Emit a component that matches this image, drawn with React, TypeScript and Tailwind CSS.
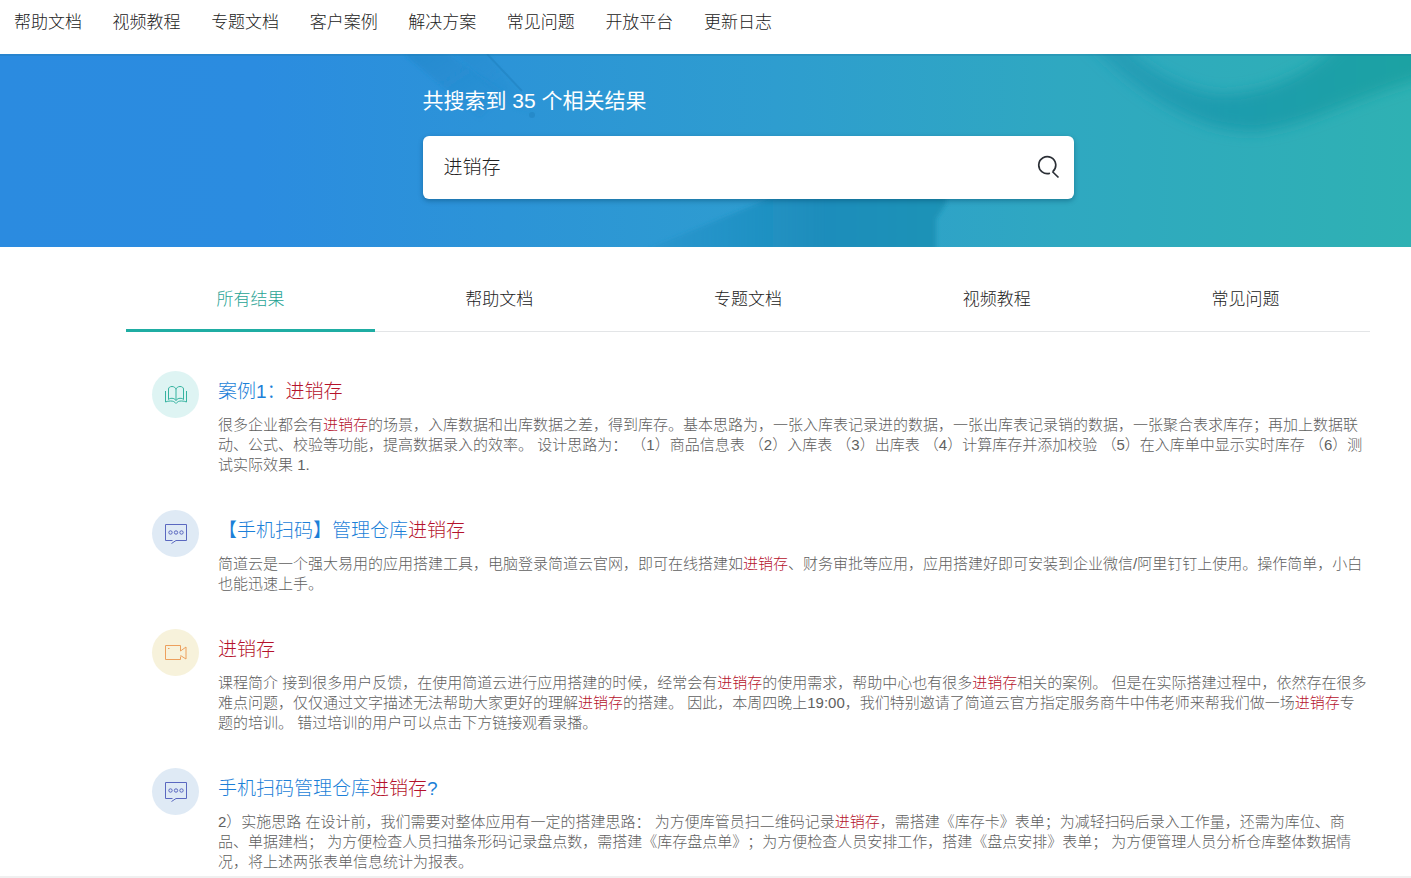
import { Fragment, useState } from "react";

const KEYWORD = "进销存";

const NAV = [
  "帮助文档",
  "视频教程",
  "专题文档",
  "客户案例",
  "解决方案",
  "常见问题",
  "开放平台",
  "更新日志",
];

const TABS = ["所有结果", "帮助文档", "专题文档", "视频教程", "常见问题"];

type Kind = "case" | "chat" | "video";

const RESULTS: { kind: Kind; title: string; body: string }[] = [
  {
    kind: "case",
    title: "案例1：进销存",
    body: "很多企业都会有进销存的场景，入库数据和出库数据之差，得到库存。基本思路为，一张入库表记录进的数据，一张出库表记录销的数据，一张聚合表求库存；再加上数据联动、公式、校验等功能，提高数据录入的效率。 设计思路为： （1）商品信息表 （2）入库表 （3）出库表 （4）计算库存并添加校验 （5）在入库单中显示实时库存 （6）测试实际效果 1.",
  },
  {
    kind: "chat",
    title: "【手机扫码】管理仓库进销存",
    body: "简道云是一个强大易用的应用搭建工具，电脑登录简道云官网，即可在线搭建如进销存、财务审批等应用，应用搭建好即可安装到企业微信/阿里钉钉上使用。操作简单，小白也能迅速上手。",
  },
  {
    kind: "video",
    title: "进销存",
    body: "课程简介 接到很多用户反馈，在使用简道云进行应用搭建的时候，经常会有进销存的使用需求，帮助中心也有很多进销存相关的案例。 但是在实际搭建过程中，依然存在很多难点问题，仅仅通过文字描述无法帮助大家更好的理解进销存的搭建。 因此，本周四晚上19:00，我们特别邀请了简道云官方指定服务商牛中伟老师来帮我们做一场进销存专题的培训。 错过培训的用户可以点击下方链接观看录播。",
  },
  {
    kind: "chat",
    title: "手机扫码管理仓库进销存?",
    body: "2）实施思路 在设计前，我们需要对整体应用有一定的搭建思路： 为方便库管员扫二维码记录进销存，需搭建《库存卡》表单；为减轻扫码后录入工作量，还需为库位、商品、单据建档； 为方便检查人员扫描条形码记录盘点数，需搭建《库存盘点单》；为方便检查人员安排工作，搭建《盘点安排》表单； 为方便管理人员分析仓库整体数据情况，将上述两张表单信息统计为报表。",
  },
];

function Highlight({ text }: { text: string }) {
  return text.split(KEYWORD).map((part, i) => (
    <Fragment key={i}>
      {i > 0 && <em className="text-[#b5122b] not-italic">{KEYWORD}</em>}
      {part}
    </Fragment>
  ));
}

function KindIcon({ kind }: { kind: Kind }) {
  if (kind === "case") {
    return (
      <span className="flex size-[47px] shrink-0 items-center justify-center rounded-full bg-[#def4f3] text-[#35b3a0]">
        <svg width="24" height="20" viewBox="0 0 24 20" fill="none" stroke="currentColor" aria-hidden="true">
          <path d="M12 4.500v11M12 4.500C11.500 2.500 10 1.500 8 1.500S4.500 2.500 4.500 4v10.500c1-1 2-1.200 3.500-1.200s3 .7 4 2.200c1-1.500 2.500-2.200 4-2.200s2.500.2 3.500 1.200V4c0-1.500-1.500-2.500-3.500-2.500s-3.500 1-4 3z" />
          <path d="M1.500 6v11c1.500-.7 3-1 5-1 2.500 0 4 .5 5.500 2.500 1.500-2 3-2.500 5.500-2.500 2 0 3.500.3 5 1V6" />
        </svg>
      </span>
    );
  }
  if (kind === "chat") {
    return (
      <span className="flex size-[47px] shrink-0 items-center justify-center rounded-full bg-[#dfeaf5] text-[#5a68c0]">
        <svg width="24" height="24" viewBox="0 0 24 24" fill="none" stroke="currentColor" aria-hidden="true">
          <path d="M8.500 18.500h-7v-16h21v16H12L7.500 21.500" />
          <circle cx="6.500" cy="10.500" r="1.700" />
          <circle cx="12" cy="10.500" r="1.700" />
          <circle cx="17.500" cy="10.500" r="1.700" />
        </svg>
      </span>
    );
  }
  return (
    <span className="flex size-[47px] shrink-0 items-center justify-center rounded-full bg-[#f7f2db] text-[#eda05c]">
      <svg width="24" height="18" viewBox="0 0 24 18" fill="none" stroke="currentColor" aria-hidden="true">
        <path d="M16.500 12.500v3h-15v-14h15v5.500l5.500-4v12l-5.500-3.500" />
        <path d="M4 4.500h1.500" />
      </svg>
    </span>
  );
}

function BannerArt() {
  return (
    <svg
      className="absolute inset-0 size-full"
      viewBox="0 0 1411 193"
      preserveAspectRatio="none"
      aria-hidden="true"
    >
      <defs>
        <linearGradient id="sea" x1="0" x2="1" y1="0" y2="0">
          <stop offset="0" stopColor="#2b8be0" />
          <stop offset="0.18" stopColor="#2b8ce0" />
          <stop offset="0.36" stopColor="#2c94d7" />
          <stop offset="0.55" stopColor="#2e9dcf" />
          <stop offset="0.75" stopColor="#2fa8c1" />
          <stop offset="1" stopColor="#2fb1b3" />
        </linearGradient>
        <linearGradient id="wave" x1="0" x2="1" y1="0" y2="0">
          <stop offset="0" stopColor="#2199b5" stopOpacity="0.7" />
          <stop offset="0.4" stopColor="#1f9cae" />
          <stop offset="1" stopColor="#1fa3a2" />
        </linearGradient>
        <linearGradient id="fin" x1="0" x2="1" y1="0" y2="0">
          <stop offset="0" stopColor="#2090c8" stopOpacity="0.4" />
          <stop offset="0.6" stopColor="#1b8dbb" />
          <stop offset="1" stopColor="#1b93b6" />
        </linearGradient>
        <linearGradient id="streak" x1="0" x2="1" y1="0" y2="1">
          <stop offset="0" stopColor="#1f86c8" stopOpacity="0.6" />
          <stop offset="1" stopColor="#2288cb" stopOpacity="0.15" />
        </linearGradient>
        <filter id="soft" x="-10%" y="-20%" width="120%" height="140%">
          <feGaussianBlur stdDeviation="7" />
        </filter>
        <filter id="softer" x="-10%" y="-20%" width="120%" height="140%">
          <feGaussianBlur stdDeviation="2" />
        </filter>
      </defs>
      <rect width="1411" height="193" fill="url(#sea)" />
      <path
        d="M1085-14C1120 20 1180 78 1255 78C1310 72 1350 44 1430 22V-20H1345C1320 14 1270 42 1215 40C1170 32 1140 8 1118-14z"
        fill="url(#wave)"
        filter="url(#soft)"
      />
      <path d="M645 196L780 140L946 140V150L936 165L936 196z" fill="url(#fin)" filter="url(#softer)" />
      <path d="M404 0L448 0L505 38L480 64z" fill="url(#streak)" filter="url(#softer)" />
      <path d="M455 0H487L534 60L515 54z" fill="url(#streak)" filter="url(#softer)" opacity="0.6" />
      <path d="M487 0L522 37" stroke="#1f7fbd" strokeWidth="2" opacity="0.5" />
      <circle cx="532" cy="61" r="3" fill="#1f7fbd" opacity="0.5" />
      <rect width="1411" height="2" fill="#1d6f9c" opacity="0.25" />
    </svg>
  );
}

export default function App() {
  const [query, setQuery] = useState(KEYWORD);
  const [tab, setTab] = useState(0);

  return (
    <div className="min-h-screen bg-white font-['Liberation_Sans','Noto_Sans_CJK_SC',sans-serif] font-light text-[#222] [text-spacing-trim:space-all]">
      <header className="h-[54px] pt-[11px] pl-3.5">
        <nav className="flex max-w-[758px] justify-between text-[17px] leading-6 whitespace-nowrap">
          {NAV.map((label) => (
            <a key={label} href="#">
              {label}
            </a>
          ))}
        </nav>
      </header>

      <section className="relative h-[193px] overflow-hidden">
        <BannerArt />
        <div className="relative mr-[41px] ml-[126px] pt-8">
          <div className="mx-auto max-w-[651px]">
            <h1 className="text-[21px] leading-[30px] font-normal text-white">共搜索到 35 个相关结果</h1>
            <form
              className="mt-5 flex h-[63px] items-center rounded-md bg-white pr-3.5 pl-[21px] shadow-[0_2px_5px_rgba(0,60,90,0.4)]"
              onSubmit={(e) => e.preventDefault()}
            >
              <input
                className="min-w-0 flex-1 pt-0.5 text-[19px] outline-none"
                aria-label="搜索"
                value={query}
                onChange={(e) => setQuery(e.target.value)}
              />
              <button type="submit" aria-label="提交搜索" className="pb-0.5 text-[#2b2f36]">
                <svg width="24" height="24" viewBox="0 0 24 24" fill="none" stroke="currentColor" strokeWidth="1.7">
                  <path d="M14 18.200A8.500 8.500 0 1 1 16.800 16.600M16.300 16.500L22.500 22.500" />
                </svg>
              </button>
            </form>
          </div>
        </div>
      </section>

      <main className="mr-[41px] ml-[126px]">
        <div role="tablist" className="mt-5 flex border-b border-[#e3e5e7]">
          {TABS.map((label, i) => (
            <button
              key={label}
              type="button"
              role="tab"
              aria-selected={i === tab}
              onClick={() => setTab(i)}
              className={
                i === tab
                  ? "-mb-px h-[65px] flex-1 border-b-3 border-[#1fada3] pt-1 text-[17px] text-[#1fa394]"
                  : "-mb-px h-[65px] flex-1 border-b-3 border-transparent pt-1 text-[17px]"
              }
            >
              {label}
            </button>
          ))}
        </div>

        <ul className="mt-[39px] flex flex-col gap-[35px] pl-[26px]">
          {RESULTS.map((r) => (
            <li key={r.title} className="flex gap-[19px]">
              <KindIcon kind={r.kind} />
              <div className="max-w-[1151px] min-w-0 flex-1 pt-[7px]">
                <h2 className="text-[19px] leading-7 font-light">
                  <a href="#" className="text-[#1c7fd8]">
                    <Highlight text={r.title} />
                  </a>
                </h2>
                <p className="mt-[9px] text-[15px] leading-5 text-[#606060]">
                  <Highlight text={r.body} />
                </p>
              </div>
            </li>
          ))}
        </ul>
      </main>

      <footer className="mt-1 h-0.5 bg-[#f0f0f0]" />
    </div>
  );
}
